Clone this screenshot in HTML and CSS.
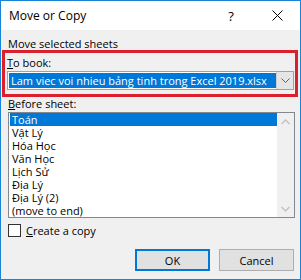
FILE: index.html
```html
<!DOCTYPE html>
<html>
<head>
<meta charset="utf-8">
<link rel="stylesheet" href="styles.css">
</head>
<body>
<div class="window">
  <div class="titlebar">
    <span class="title">Move or Copy</span>
    <span class="cap-btn help">?</span>
    <span class="cap-btn close"><svg width="11" height="11" viewBox="0 0 11 11"><path d="M0.5 0.5 L10.5 10.5 M10.5 0.5 L0.5 10.5" stroke="#000" stroke-width="1" fill="none"/></svg></span>
  </div>
  <div class="content">
    <div class="label first">Move selected sheets</div>
    <div class="mark">
      <div class="label inner"><u>T</u>o book:</div>
      <div class="combo">
        <span class="combo-text"><span class="sel">Lam viec voi nhieu bảng tinh trong Excel 2019.xlsx</span></span>
        <span class="combo-btn"><svg width="9" height="6" viewBox="0 0 9 6"><path d="M0.5 0.5 L4.5 4.5 L8.5 0.5" stroke="#606060" stroke-width="1" fill="none"/></svg></span>
      </div>
    </div>
    <div class="label"><u>B</u>efore sheet:</div>
    <div class="listbox">
      <ul class="items">
        <li class="item selected">Toán</li>
        <li class="item">Vật Lý</li>
        <li class="item">Hóa Học</li>
        <li class="item">Văn Học</li>
        <li class="item">Lịch Sử</li>
        <li class="item">Địa Lý</li>
        <li class="item">Địa Lý (2)</li>
        <li class="item">(move to end)</li>
      </ul>
      <div class="scrollbar">
        <span class="arrow"><svg width="9" height="6" viewBox="0 0 9 6"><path d="M0.5 5 L4.5 1 L8.5 5" stroke="#c2c2c2" stroke-width="1.4" fill="none"/></svg></span>
        <span class="arrow"><svg width="9" height="6" viewBox="0 0 9 6"><path d="M0.5 1 L4.5 5 L8.5 1" stroke="#c2c2c2" stroke-width="1.4" fill="none"/></svg></span>
      </div>
    </div>
    <div class="check"><span class="box"></span><span class="check-label"><u>C</u>reate a copy</span></div>
    <div class="buttons">
      <button class="btn default">OK</button>
      <button class="btn">Cancel</button>
    </div>
  </div>
</div>
</body>
</html>
```
FILE: styles.css
```css
html, body {
  margin: 0;
  padding: 0;
  background: #f0f0f0;
}
.window {
  width: 301px;
  height: 280px;
  box-sizing: border-box;
  border: 1px solid #1883d7;
  background: #f0f0f0;
  font-family: "Open Sans", "Liberation Sans", sans-serif;
  font-size: 11px;
  color: #000;
  overflow: hidden;
}
.titlebar {
  height: 29px;
  background: #fff;
  display: flex;
  align-items: center;
}
.title {
  flex: 1;
  margin-left: 8px;
  line-height: 16px;
  font-size: 12px;
}
.cap-btn {
  width: 46px;
  height: 29px;
  display: flex;
  align-items: center;
  justify-content: center;
}
.help {
  font-size: 13px;
}
.close svg {
  display: block;
}
.content {
  padding: 0 6px 0 1px;
}
.label {
  line-height: 13px;
  height: 13px;
  margin-left: 6px;
  white-space: nowrap;
}
.label.first {
  margin-top: 7px;
}
.mark {
  border: 3px solid #dc1f2c;
  height: 41px;
  width: 290px;
}
.label.inner {
  margin-left: 2px;
  margin-top: 3px;
}
.combo {
  margin: 2px 0 0 2px;
  width: 287px;
  height: 19px;
  box-sizing: border-box;
  border: 1px solid #a0a0a0;
  background: #fff;
  display: flex;
}
.combo-text {
  flex: 1;
  min-width: 0;
  padding: 1px 0 1px 1px;
  display: flex;
}
.sel {
  flex: 1;
  min-width: 0;
  background: #0078d7;
  color: #fff;
  line-height: 15px;
  padding-left: 2px;
  white-space: nowrap;
  overflow: hidden;
}
.combo-btn {
  flex: none;
  width: 16px;
  background: #e5e5e5;
  border-left: 1px solid #cccccc;
  display: flex;
  align-items: center;
  justify-content: center;
}
.combo-btn svg {
  display: block;
}
.listbox {
  margin: 2px 0 0 6px;
  width: 287px;
  height: 106px;
  box-sizing: border-box;
  border: 1px solid #828790;
  background: #fff;
  display: flex;
}
.items {
  list-style: none;
  margin: 0;
  padding: 0;
  flex: 1;
  min-width: 0;
}
.item {
  height: 13px;
  line-height: 13px;
  padding-left: 2px;
  margin-left: 1px;
  white-space: nowrap;
}
.item.selected {
  background: #0078d7;
  color: #fff;
}
.scrollbar {
  flex: none;
  width: 17px;
  background: #f0f0f0;
  display: flex;
  flex-direction: column;
  justify-content: space-between;
}
.arrow {
  height: 17px;
  display: flex;
  align-items: center;
  justify-content: center;
}
.arrow svg {
  display: block;
}
.check {
  margin: 6px 0 0 6px;
  display: flex;
  align-items: center;
  height: 13px;
}
.box {
  width: 13px;
  height: 13px;
  box-sizing: border-box;
  border: 1px solid #333;
  background: #fff;
}
.check-label {
  margin-left: 5px;
  line-height: 13px;
}
.buttons {
  margin-top: 12px;
  display: flex;
  justify-content: flex-end;
  gap: 9px;
}
.btn {
  width: 75px;
  height: 22px;
  box-sizing: border-box;
  border: 1px solid #adadad;
  background: #e1e1e1;
  font-family: inherit;
  font-size: 11px;
  color: #000;
  padding: 0;
  margin: 0;
}
.btn.default {
  border: 2px solid #0078d7;
}
```
